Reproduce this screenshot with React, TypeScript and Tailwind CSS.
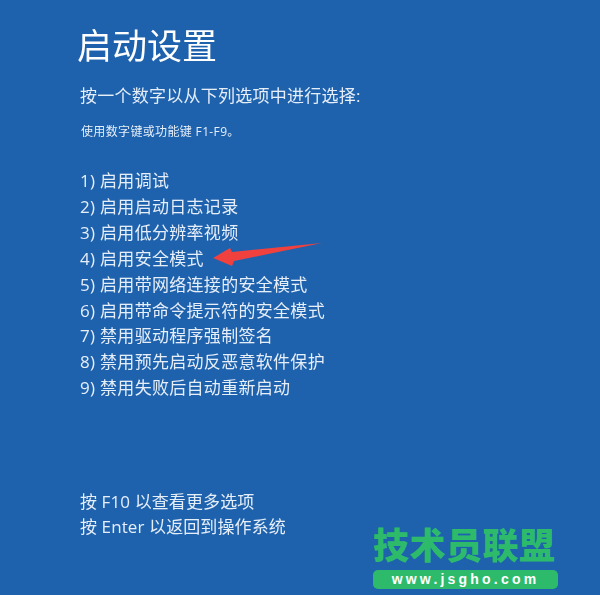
export default function App() {
  const items = [
    "1) 启用调试",
    "2) 启用启动日志记录",
    "3) 启用低分辨率视频",
    "4) 启用安全模式",
    "5) 启用带网络连接的安全模式",
    "6) 启用带命令提示符的安全模式",
    "7) 禁用驱动程序强制签名",
    "8) 禁用预先启动反恶意软件保护",
    "9) 禁用失败后自动重新启动",
  ];
  const font = "font-['Open_Sans','Noto_Sans_CJK_SC',sans-serif]";
  return (
    <div className={`relative w-[600px] h-[595px] overflow-hidden bg-[#1e62ae] text-[#e6eef7] ${font}`}>
      <div className="flex flex-col pl-[80px] pt-[22px] blur-[0.4px]">
        <h1 className="-ml-[3px] text-[35px] leading-[48px] font-normal text-white">启动设置</h1>
        <p className="mt-[13px] text-[17px] leading-[26px] tracking-[0.25px]">按一个数字以从下列选项中进行选择:</p>
        <p className="mt-[15px] ml-[1px] text-[12px] leading-[16px] tracking-[0.35px]">使用数字键或功能键 F1-F9。</p>
        <ul className="mt-[28px] flex flex-col text-[17px] leading-[25.9px]">
          {items.map((t) => (
            <li key={t} className="tracking-[0.3px]">{t}</li>
          ))}
        </ul>
        <div className="mt-[88px] flex flex-col text-[17px] leading-[25px] tracking-[0.1px]">
          <p>按 F10 以查看更多选项</p>
          <p>按 Enter 以返回到操作系统</p>
        </div>
      </div>
      <svg className="absolute left-[205px] top-[236px]" width="125" height="36" viewBox="205 236 125 36">
        <polygon points="213,258 230,248 232,252 322,243 234,261 232,266" fill="#f0413f" />
      </svg>
      <div className="absolute left-[373px] top-[525px] w-[185px] flex flex-col">
        <div className="text-[36px] leading-[42px] font-black tracking-[0.5px] text-[#2dbb6b] whitespace-nowrap">技术员联盟</div>
        <div className="mt-[3px] h-[19px] rounded-[5px] bg-[#2dbb6b] text-white text-[14px] leading-[19px] font-bold text-center tracking-[3.2px] font-['Liberation_Sans',sans-serif]">
          www.jsgho.com
        </div>
      </div>
    </div>
  );
}
